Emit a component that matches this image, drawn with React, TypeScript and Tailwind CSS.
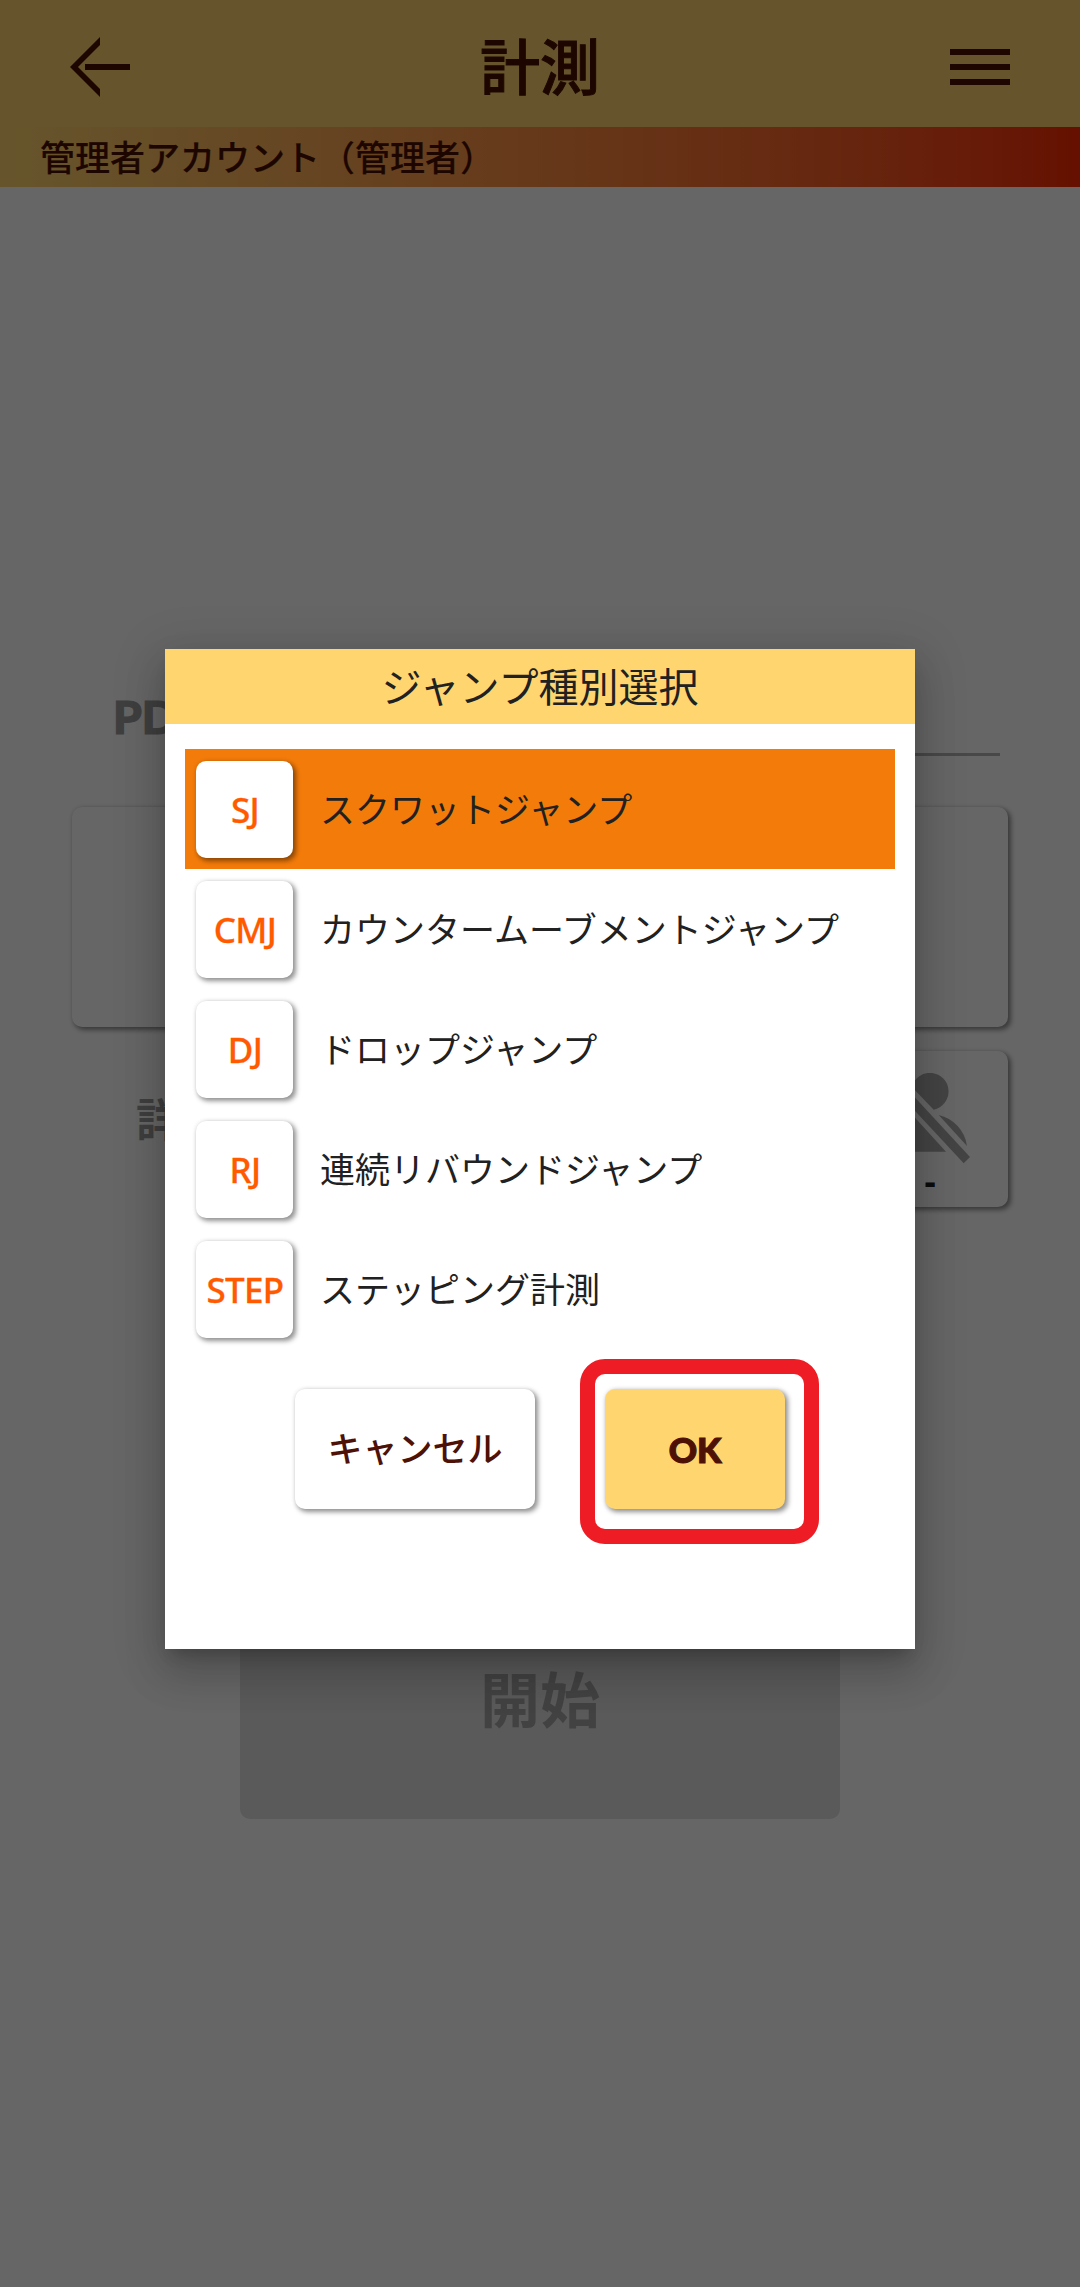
"use client";

import { useState } from "react";

const FONT = "font-['Noto_Sans','Noto_Sans_CJK_JP',sans-serif]";
const CARD_SHADOW = "shadow-[2.5px_2.5px_5px_rgba(0,0,0,0.42),0_0_5px_rgba(0,0,0,0.08)]";

const jumpTypes = [
  { code: "SJ", label: "スクワットジャンプ" },
  { code: "CMJ", label: "カウンタームーブメントジャンプ" },
  { code: "DJ", label: "ドロップジャンプ" },
  { code: "RJ", label: "連続リバウンドジャンプ" },
  { code: "STEP", label: "ステッピング計測" },
];

function BackIcon() {
  return (
    <svg width="60" height="60" viewBox="0 0 60 60" fill="currentColor">
      <path d="M30 0L0 30L30 60V52L8 30L30 8Z" />
      <path d="M15 27H60V33H15Z" />
    </svg>
  );
}

function MenuIcon() {
  return (
    <svg width="60" height="36" viewBox="0 0 60 36" fill="currentColor">
      <path d="M0 0H60V6H0ZM0 15H60V21H0ZM0 30H60V36H0Z" />
    </svg>
  );
}

function NoPersonIcon() {
  return (
    <svg width="80" height="92" viewBox="0 0 80 92" fill="currentColor">
      {/* head */}
      <path d="M21.9 14A18.6 18.6 0 1 1 43.7 36.7Z" />
      {/* shoulders */}
      <path d="M48.7 42A37 37 0 0 1 77 73Z" />
      <path d="M22.5 42L56 78.7H3C3 62 10 49 22.5 42Z" />
      {/* slash */}
      <path d="M6 4L80 84L73.7 90.3L0 11Z" />
    </svg>
  );
}

export default function App() {
  const [selected, setSelected] = useState("SJ");

  return (
    <div className={`relative w-[1080px] h-[2287px] overflow-hidden bg-white ${FONT}`}>
      {/* Header */}
      <header className="flex items-center justify-between h-[127px] px-[70px] pt-[7px] bg-[#ffd56f] text-[#4d1000]">
        <BackIcon />
        <h1 className="text-[60px] leading-[60px] font-medium [-webkit-text-stroke:1px_#4d1000]">計測</h1>
        <MenuIcon />
      </header>
      <div className="flex items-center h-[60px] px-10 pt-[2px] text-[35px] font-medium text-[#4d1000] [-webkit-text-stroke:0.2px_#4d1000] bg-linear-to-r from-[#ffd56f] to-[#fd2800]">
        管理者アカウント（管理者）
      </div>

      {/* Measurement form */}
      <main className="flex flex-col">
        <div className="flex items-center h-[132px] mt-[437px] ml-[113px] mr-[80px]">
          <span className="w-[180px] pt-[52px] font-['Lato'] text-[46px] font-black text-[#9e9e9e] [-webkit-text-stroke:1.2px_#9e9e9e]">PD</span>
          <span className="flex-1 h-[132px] border-b-[3px] border-[#b5b5b5]" />
        </div>
        <div className={`h-[220px] mt-[51px] mx-[72px] rounded-[10px] bg-white ${CARD_SHADOW}`} />
        <div className="flex justify-between mt-[24px] ml-[136px] mr-[72px]">
          <span className="pt-[35px] text-[45px] font-bold text-[#9e9e9e]">詳細</span>
          <div className={`flex flex-col items-center w-[156px] h-[156px] pt-[22px] rounded-[10px] bg-white text-[#aaaaaa] ${CARD_SHADOW}`}>
            <NoPersonIcon />
            <span className="-mt-[3px] text-[35px] leading-[38px] font-bold text-[#202020]">-</span>
          </div>
        </div>
        <div className="flex items-center justify-center w-[600px] h-[240px] mt-[372px] mx-auto pt-[1px] rounded-[10px] bg-[#e0e0e0] text-[60px] font-bold text-[#a6a6a6]">
          開始
        </div>
      </main>

      {/* Dialog */}
      <div className="absolute inset-0 flex justify-center items-start pt-[649px] bg-black/60">
        <div className="flex flex-col w-[750px] h-[1000px] bg-white text-[#212121] shadow-[0_11px_15px_-7px_rgba(0,0,0,0.2),0_24px_38px_3px_rgba(0,0,0,0.14),0_9px_46px_8px_rgba(0,0,0,0.12)]">
          <h2 className="flex items-center justify-center h-[75px] bg-[#ffd56f] text-[40px]">
            ジャンプ種別選択
          </h2>
          <ul className="mt-[25px] mx-5">
            {jumpTypes.map((t) => (
              <li
                key={t.code}
                onClick={() => setSelected(t.code)}
                className={`flex items-center h-[120px] pl-[11px] text-[35px] cursor-pointer ${selected === t.code ? "bg-[#f37b0a]" : ""}`}
              >
                <span className={`flex items-center justify-center w-[97px] h-[97px] mr-[27px] pt-[2px] pl-[1px] rounded-[10px] bg-white font-medium tracking-[-0.7px] text-[#ff5a00] [-webkit-text-stroke:0.3px_#ff5a00] ${CARD_SHADOW}`}>
                  {t.code}
                </span>
                <span className="pt-[2px]">{t.label}</span>
              </li>
            ))}
          </ul>
          <div className="flex items-start mt-[10px] ml-[130px] text-[35px] text-[#4d1106]">
            <button className={`w-[240px] h-[120px] mt-[30px] rounded-[10px] bg-white font-medium ${CARD_SHADOW}`}>
              キャンセル
            </button>
            <div className="ml-[45px] w-[239px] h-[185px] pt-[15px] pl-[10px] rounded-[25px] border-[15px] border-[#ee1c24]">
              <button className={`w-[180px] h-[120px] rounded-[10px] bg-[#ffd56f] font-['Lato'] font-black [-webkit-text-stroke:1.2px_#4d1106] ${CARD_SHADOW}`}>
                OK
              </button>
            </div>
          </div>
        </div>
      </div>
    </div>
  );
}
